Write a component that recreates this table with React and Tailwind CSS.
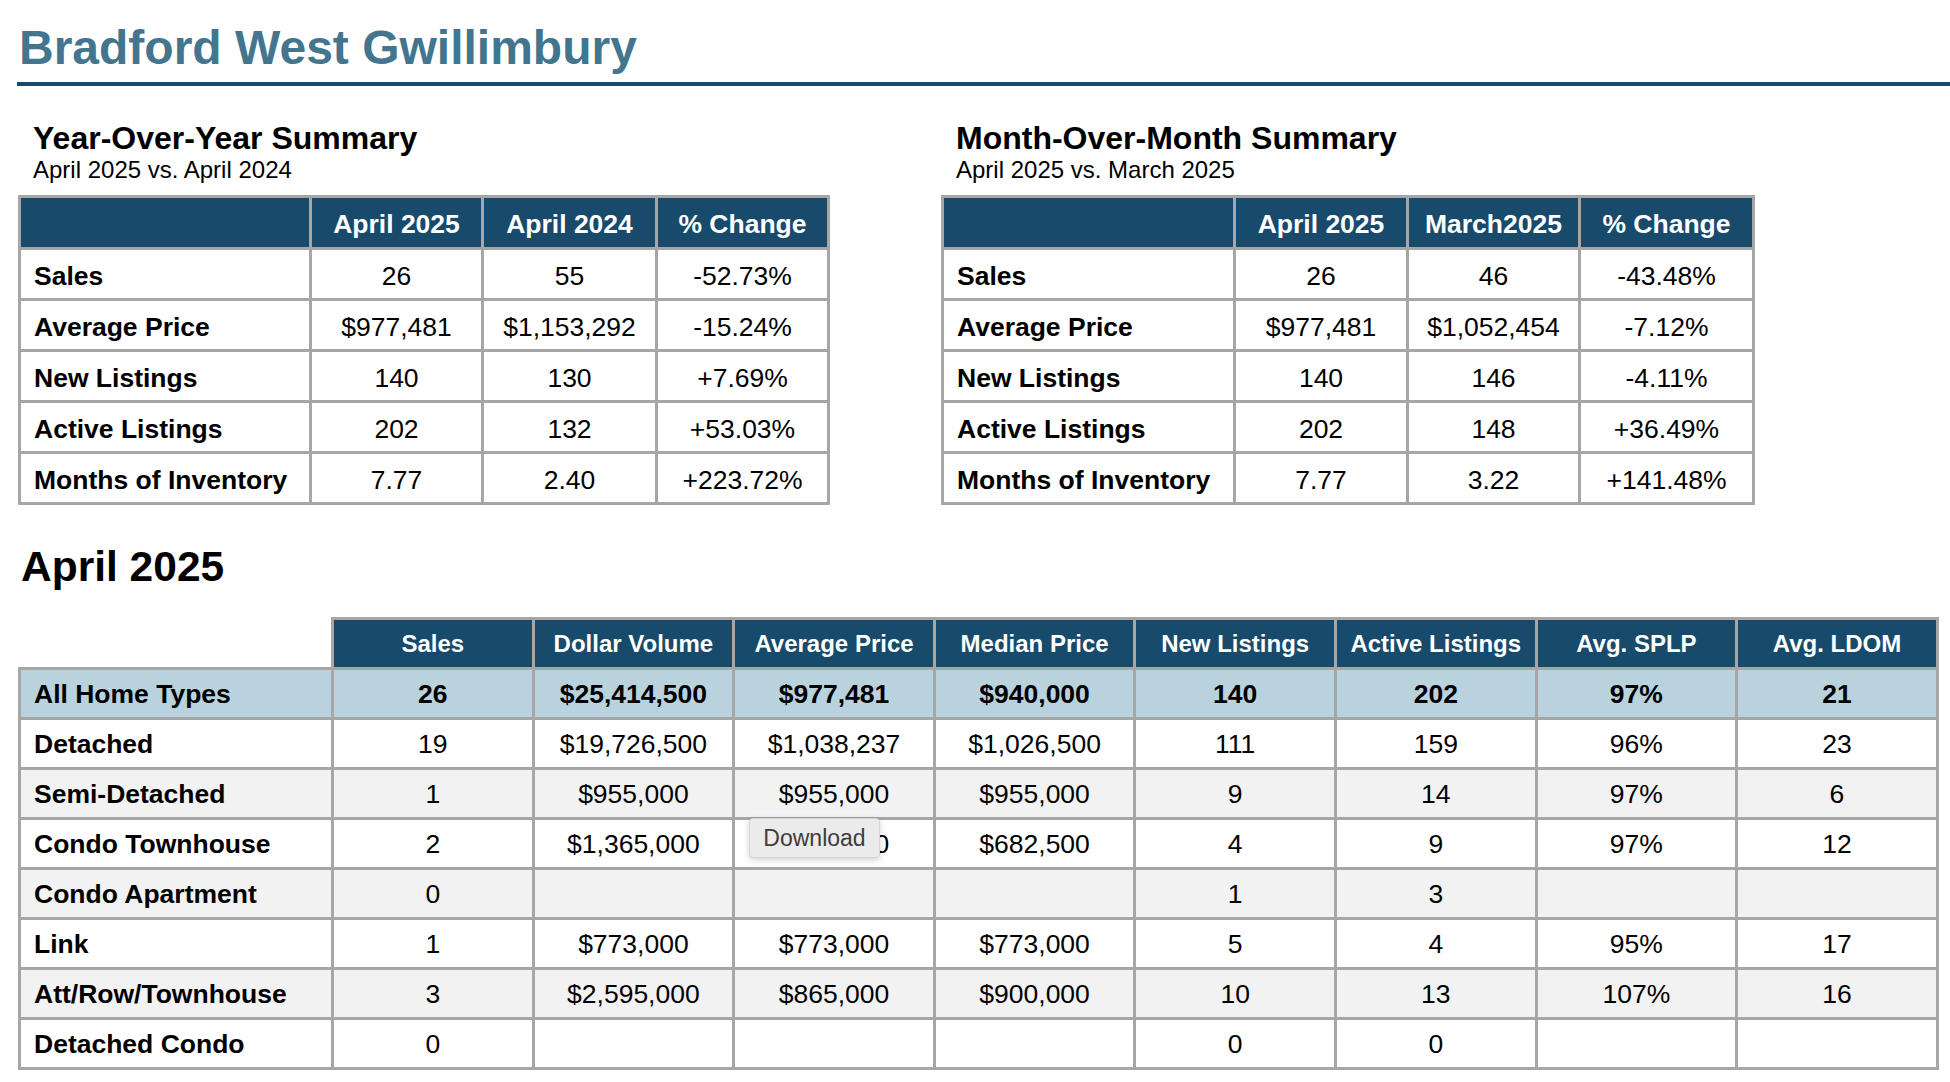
import React from 'react';

const yoy = {
  title: 'Year-Over-Year Summary',
  sub: 'April 2025 vs. April 2024',
  cols: ['April 2025', 'April 2024', '% Change'],
  grid: 'grid-cols-[294px_172px_174px_172px]',
  rows: [
    ['Sales', '26', '55', '-52.73%'],
    ['Average Price', '$977,481', '$1,153,292', '-15.24%'],
    ['New Listings', '140', '130', '+7.69%'],
    ['Active Listings', '202', '132', '+53.03%'],
    ['Months of Inventory', '7.77', '2.40', '+223.72%'],
  ],
};

const mom = {
  title: 'Month-Over-Month Summary',
  sub: 'April 2025 vs. March 2025',
  cols: ['April 2025', 'March2025', '% Change'],
  grid: 'grid-cols-[295px_173px_172px_174px]',
  rows: [
    ['Sales', '26', '46', '-43.48%'],
    ['Average Price', '$977,481', '$1,052,454', '-7.12%'],
    ['New Listings', '140', '146', '-4.11%'],
    ['Active Listings', '202', '148', '+36.49%'],
    ['Months of Inventory', '7.77', '3.22', '+141.48%'],
  ],
};

const typeCols = ['Sales', 'Dollar Volume', 'Average Price', 'Median Price', 'New Listings', 'Active Listings', 'Avg. SPLP', 'Avg. LDOM'];

const typeRows = [
  ['All Home Types', '26', '$25,414,500', '$977,481', '$940,000', '140', '202', '97%', '21'],
  ['Detached', '19', '$19,726,500', '$1,038,237', '$1,026,500', '111', '159', '96%', '23'],
  ['Semi-Detached', '1', '$955,000', '$955,000', '$955,000', '9', '14', '97%', '6'],
  ['Condo Townhouse', '2', '$1,365,000', '$682,500', '$682,500', '4', '9', '97%', '12'],
  ['Condo Apartment', '0', '', '', '', '1', '3', '', ''],
  ['Link', '1', '$773,000', '$773,000', '$773,000', '5', '4', '95%', '17'],
  ['Att/Row/Townhouse', '3', '$2,595,000', '$865,000', '$900,000', '10', '13', '107%', '16'],
  ['Detached Condo', '0', '', '', '', '0', '0', '', ''],
];

// grey rule lines: every cell owns its right + bottom edge
const line = 'border-r-[3px] border-b-[3px] border-[#a6a6a6]';

const SummaryTable = ({ data }) => (
  <div>
    <h2 className="pl-[15px] text-[32px] font-bold leading-none">{data.title}</h2>
    <p className="mt-[4px] pl-[15px] text-[24px] leading-none">{data.sub}</p>
    <div className={`mt-[13px] grid ${data.grid} text-[26.5px] leading-none`}>
      <div className={`${line} h-[55px] border-l-[3px] border-t-[3px] bg-[#174a6b]`}></div>
      {data.cols.map((c) => (
        <div key={c} className={`${line} flex h-[55px] items-center justify-center border-t-[3px] bg-[#174a6b] pt-[4px] font-bold text-white`}>
          {c}
        </div>
      ))}
      {data.rows.map((row) =>
        row.map((cell, i) => (
          <div
            key={row[0] + i}
            className={
              i === 0
                ? `${line} flex h-[51px] items-center border-l-[3px] pl-[13px] pt-[4px] font-bold`
                : `${line} flex h-[51px] items-center justify-center pt-[4px]`
            }
          >
            {cell}
          </div>
        ))
      )}
    </div>
  </div>
);

const App = () => {
  return (
    <div className="relative min-h-screen bg-white pl-[18px] font-['Liberation_Sans',Arial,sans-serif] text-black">
      {/* Header */}
      <h1 className="pl-px pt-[24px] text-[48px] font-bold leading-none text-[#44758f]">Bradford West Gwillimbury</h1>
      <div className="-ml-px mt-[10px] h-[4px] bg-[#174a6b]"></div>

      {/* Summaries */}
      <div className="mt-[36px] flex gap-[111px]">
        <SummaryTable data={yoy} />
        <SummaryTable data={mom} />
      </div>

      {/* Home types */}
      <h2 className="mt-[41px] pl-[3px] text-[42.5px] font-bold leading-none">April 2025</h2>
      <div className="mt-[28px] grid grid-cols-[316px_repeat(8,200.6px)] leading-none">
        <div className="h-[53px] border-r-[3px] border-b-[3px] border-[#a6a6a6]"></div>
        {typeCols.map((c) => (
          <div key={c} className={`${line} flex h-[53px] items-center justify-center border-t-[3px] bg-[#174a6b] pt-[2px] text-[24px] font-bold text-white`}>
            {c}
          </div>
        ))}
        {typeRows.map((row, r) => {
          const bg = r === 0 ? 'bg-[#b8d3de] font-bold' : r % 2 === 0 ? 'bg-[#f2f2f2]' : 'bg-white';
          return row.map((cell, i) => (
            <div
              key={row[0] + i}
              className={
                i === 0
                  ? `${line} ${bg} flex h-[50px] items-center border-l-[3px] pl-[13px] pt-[2px] text-[26.5px] font-bold`
                  : `${line} ${bg} flex h-[50px] items-center justify-center pt-[2px] text-[26.5px]`
              }
            >
              {cell}
            </div>
          ));
        })}
      </div>

      {/* hover tooltip */}
      <div className="absolute left-[749px] top-[818px] flex h-[40px] w-[131px] items-center justify-center rounded-[4px] border border-[#d4d4d4] bg-[#ebebeb] text-[23px] text-[#3d3d3d] shadow-[0_2px_6px_rgba(0,0,0,0.18)]">
        Download
      </div>
    </div>
  );
};

export default App;
